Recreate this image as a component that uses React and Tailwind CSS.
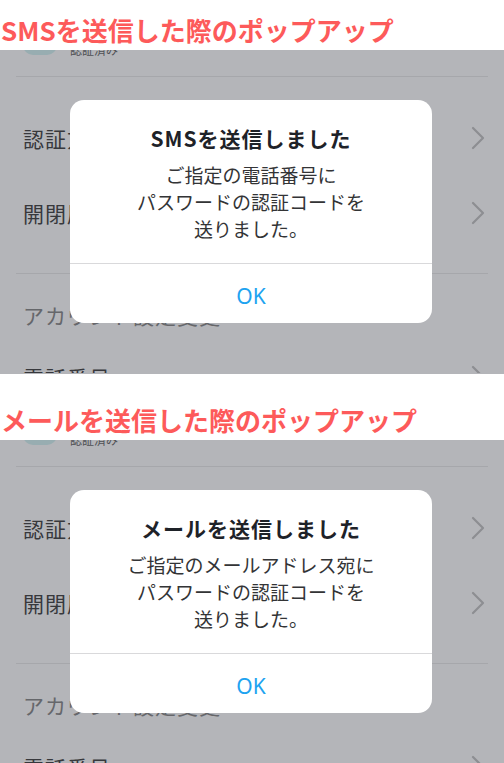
import React from "react";

const JP = { fontFamily: '"Noto Sans CJK JP", "Noto Sans", sans-serif' };

function Chevron({ className = "" }) {
  return (
    <svg width="14" height="24" viewBox="0 0 14 24" className={className}>
      <path d="M2 2 L12 12 L2 22" fill="none" stroke="#8d8e92" strokeWidth="2.2" strokeLinecap="round" strokeLinejoin="round" />
    </svg>
  );
}

function Screen({ title, body }) {
  return (
    <div className="relative h-[323px] overflow-hidden bg-[#b4b5b9]">
      <div className="-mt-[35px] flex items-start pl-[23px]">
        <div className="h-[40px] w-[34px] rounded-[10px] bg-[#98adb1]" />
        <div className="ml-[13px] mt-[27px] text-[12px] leading-[16px] text-[#505155]">認証済み</div>
      </div>
      <div className="mx-4 mt-[18px] h-px bg-[#a6a7ab]" />
      <div className="mt-[48px] flex items-center justify-between pl-[23px] pr-[19px] text-[21px] leading-[26px] tracking-[1px] text-[#37383c]">
        <span>認証方法の変更</span>
        <Chevron />
      </div>
      <div className="mt-[49px] flex items-center justify-between pl-[23px] pr-[19px] text-[21px] leading-[26px] tracking-[1px] text-[#37383c]">
        <span>開閉履歴</span>
        <Chevron />
      </div>
      <div className="mx-4 mt-[47px] h-px bg-[#a6a7ab]" />
      <div className="mt-[28px] pl-[23px] text-[21px] leading-[26px] tracking-[1px] text-[#66676b]">アカウント設定変更</div>
      <div className="mt-[36px] flex items-center justify-between pl-[23px] pr-[19px] text-[21px] leading-[26px] tracking-[1px] text-[#37383c]">
        <span>電話番号</span>
        <Chevron />
      </div>

      <div className="absolute left-[70px] top-[50px] w-[362px] overflow-hidden rounded-[14px] bg-white">
        <div className="pt-[24px] text-center text-[21px] font-bold leading-[28px] tracking-[1px] text-[#1e2228]">{title}</div>
        <div className="mt-[9px] pb-[21px] text-center text-[19px] leading-[27px] text-[#333436]">
          {body.map((l, i) => (
            <div key={i}>{l}</div>
          ))}
        </div>
        <div className="h-px bg-[#d9d9db]" />
        <div className="flex h-[59px] items-center justify-center pt-[7px] text-[21px] text-[#1ea3f0]" style={{ fontFamily: '"Noto Sans", "Noto Sans CJK JP", sans-serif' }}>
          OK
        </div>
      </div>
    </div>
  );
}

function Header({ text, tall }) {
  return (
    <div className={`flex items-end bg-white pb-[7px] ${tall ? "h-[66px]" : "h-[50px]"}`}>
      <div className="whitespace-nowrap pl-[1px] text-[26px] font-bold leading-[26px] text-[#fd5a5a]">{text}</div>
    </div>
  );
}

export default function App() {
  return (
    <div className="w-[504px] h-[763px] overflow-hidden bg-white" style={JP}>
      <Header text="SMSを送信した際のポップアップ" />
      <Screen
        title="SMSを送信しました"
        body={["ご指定の電話番号に", "パスワードの認証コードを", "送りました。"]}
      />
      <div className="h-px bg-[#b4b5b9]" />
      <Header text="メールを送信した際のポップアップ" tall />
      <Screen
        title="メールを送信しました"
        body={["ご指定のメールアドレス宛に", "パスワードの認証コードを", "送りました。"]}
      />
    </div>
  );
}
